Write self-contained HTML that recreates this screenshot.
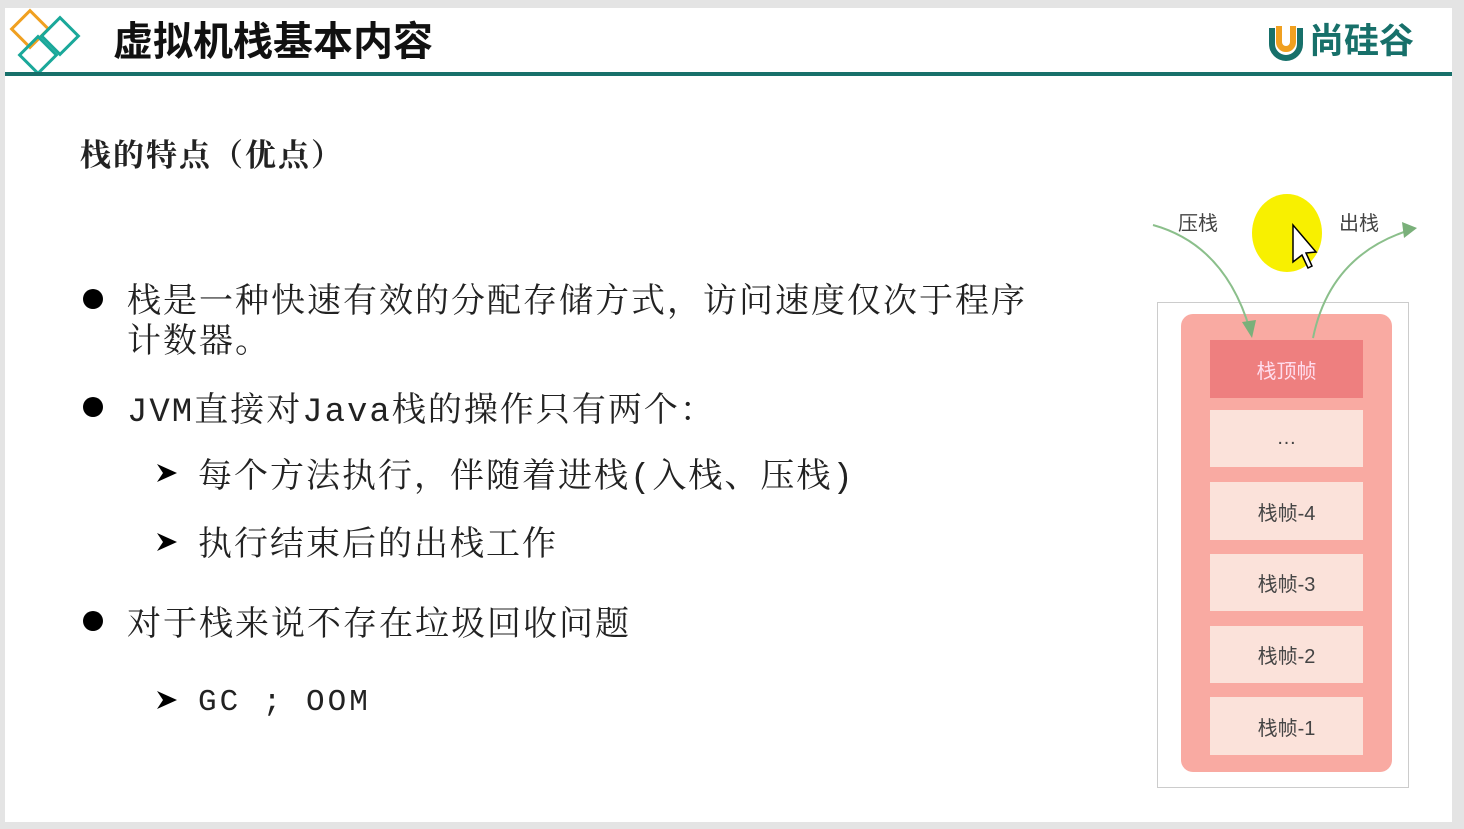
<!DOCTYPE html>
<html><head><meta charset="utf-8"><style>
html,body{margin:0;padding:0;}
body{width:1464px;height:829px;background:#e4e4e4;position:relative;overflow:hidden;font-family:"Liberation Mono","Noto Serif CJK SC",serif;}
.slide{position:absolute;left:5px;top:8px;width:1447px;height:814px;background:#fff;}
.a{position:absolute;white-space:nowrap;color:#222;}
.t{font-size:34px;letter-spacing:2px;line-height:44px;}
.dot{position:absolute;width:20px;height:20px;border-radius:50%;background:#000;}
.arr{position:absolute;}
.fr{position:absolute;left:1210px;width:153px;background:#fbe2da;font-family:"Liberation Sans","Noto Sans CJK SC",sans-serif;font-size:20px;color:#444;display:flex;align-items:center;justify-content:center;}
</style></head><body>
<div class="slide"></div>
<svg style="position:absolute;left:0;top:0" width="90" height="80">
<rect x="17" y="16" width="26" height="26" transform="rotate(45 30 29)" fill="none" stroke="#f0a020" stroke-width="3"/>
<rect x="47" y="23" width="26" height="26" transform="rotate(45 60 36)" fill="none" stroke="#1aa89a" stroke-width="3"/>
<rect x="25" y="42" width="26" height="26" transform="rotate(45 38 55)" fill="none" stroke="#1aa89a" stroke-width="3"/>
</svg>
<div class="a" style="left:113px;top:16px;font-size:40px;line-height:52px;font-weight:bold;font-family:'Liberation Sans','Noto Sans CJK SC',sans-serif;color:#111;">虚拟机栈基本内容</div>
<div style="position:absolute;left:5px;top:72px;width:1447px;height:4px;background:#17706a;"></div>
<svg style="position:absolute;left:1264px;top:22px" width="44" height="42">
<path d="M8 6 V22 A14 14 0 0 0 36 22 V6" fill="none" stroke="#17706a" stroke-width="6"/>
<path d="M15 4 V20 A7 7 0 0 0 29 20 V4" fill="none" stroke="#f0a020" stroke-width="6"/>
</svg>
<div class="a" style="left:1309px;top:20px;font-size:35px;line-height:44px;font-weight:bold;color:#17706a;font-family:'Liberation Sans','Noto Sans CJK SC',sans-serif;">尚硅谷</div>

<div class="a" style="left:80px;top:130px;font-size:31px;font-weight:bold;letter-spacing:2px;">栈的特点（优点）</div>
<div class="dot" style="left:83px;top:289px"></div>
<div class="a t" style="left:127px;top:282px;">栈是一种快速有效的分配存储方式，访问速度仅次于程序</div>
<div class="a t" style="left:127px;top:322px;">计数器。</div>
<div class="dot" style="left:83px;top:397px"></div>
<div class="a t" style="left:127px;top:391px;">JVM直接对Java栈的操作只有两个：</div>
<svg class="arr" style="left:155px;top:462px" width="24" height="22"><path d="M2 2 L22 11 L2 20 L8 11 Z" fill="#000"/></svg>
<div class="a t" style="left:198px;top:457px;">每个方法执行，伴随着进栈(入栈、压栈)</div>
<svg class="arr" style="left:155px;top:531px" width="24" height="22"><path d="M2 2 L22 11 L2 20 L8 11 Z" fill="#000"/></svg>
<div class="a t" style="left:198px;top:525px;">执行结束后的出栈工作</div>
<div class="dot" style="left:83px;top:611px"></div>
<div class="a t" style="left:127px;top:605px;">对于栈来说不存在垃圾回收问题</div>
<svg class="arr" style="left:155px;top:689px" width="24" height="22"><path d="M2 2 L22 11 L2 20 L8 11 Z" fill="#000"/></svg>
<div class="a t" style="left:198px;top:681px;font-size:31px;letter-spacing:3px;">GC ; OOM</div>

<div style="position:absolute;left:1157px;top:302px;width:250px;height:484px;border:1px solid #ccc;"></div>
<div style="position:absolute;left:1181px;top:314px;width:211px;height:458px;background:#f9aaa2;border-radius:12px;"></div>
<div class="fr" style="top:340px;height:58px;background:#ee7f7f;color:#fde;">栈顶帧</div>
<div class="fr" style="top:410px;height:57px;">…</div>
<div class="fr" style="top:482px;height:58px;">栈帧-4</div>
<div class="fr" style="top:554px;height:57px;">栈帧-3</div>
<div class="fr" style="top:626px;height:57px;">栈帧-2</div>
<div class="fr" style="top:697px;height:58px;">栈帧-1</div>
<div style="position:absolute;left:1252px;top:194px;width:70px;height:78px;border-radius:50%;background:#f8f000;"></div>
<svg style="position:absolute;left:1140px;top:200px" width="300" height="150">
<path d="M13 25 Q85 45 110 130" fill="none" stroke="#8bbf8b" stroke-width="2"/>
<path d="M102 122 L112 138 L116 120 Z" fill="#7ab07a"/>
<path d="M173 138 Q190 55 270 30" fill="none" stroke="#8bbf8b" stroke-width="2"/>
<path d="M262 22 L277 28 L264 38 Z" fill="#7ab07a"/>
<path d="M153 25 L153 62 L162 55 L168 68 L172 66 L166 53 L176 52 Z" fill="#fff" stroke="#000" stroke-width="1.5"/>
</svg>
<div class="a" style="left:1178px;top:207px;font-size:20px;color:#444;font-family:'Liberation Sans','Noto Sans CJK SC',sans-serif;">压栈</div>
<div class="a" style="left:1339px;top:207px;font-size:20px;color:#444;font-family:'Liberation Sans','Noto Sans CJK SC',sans-serif;">出栈</div>
</body></html>
